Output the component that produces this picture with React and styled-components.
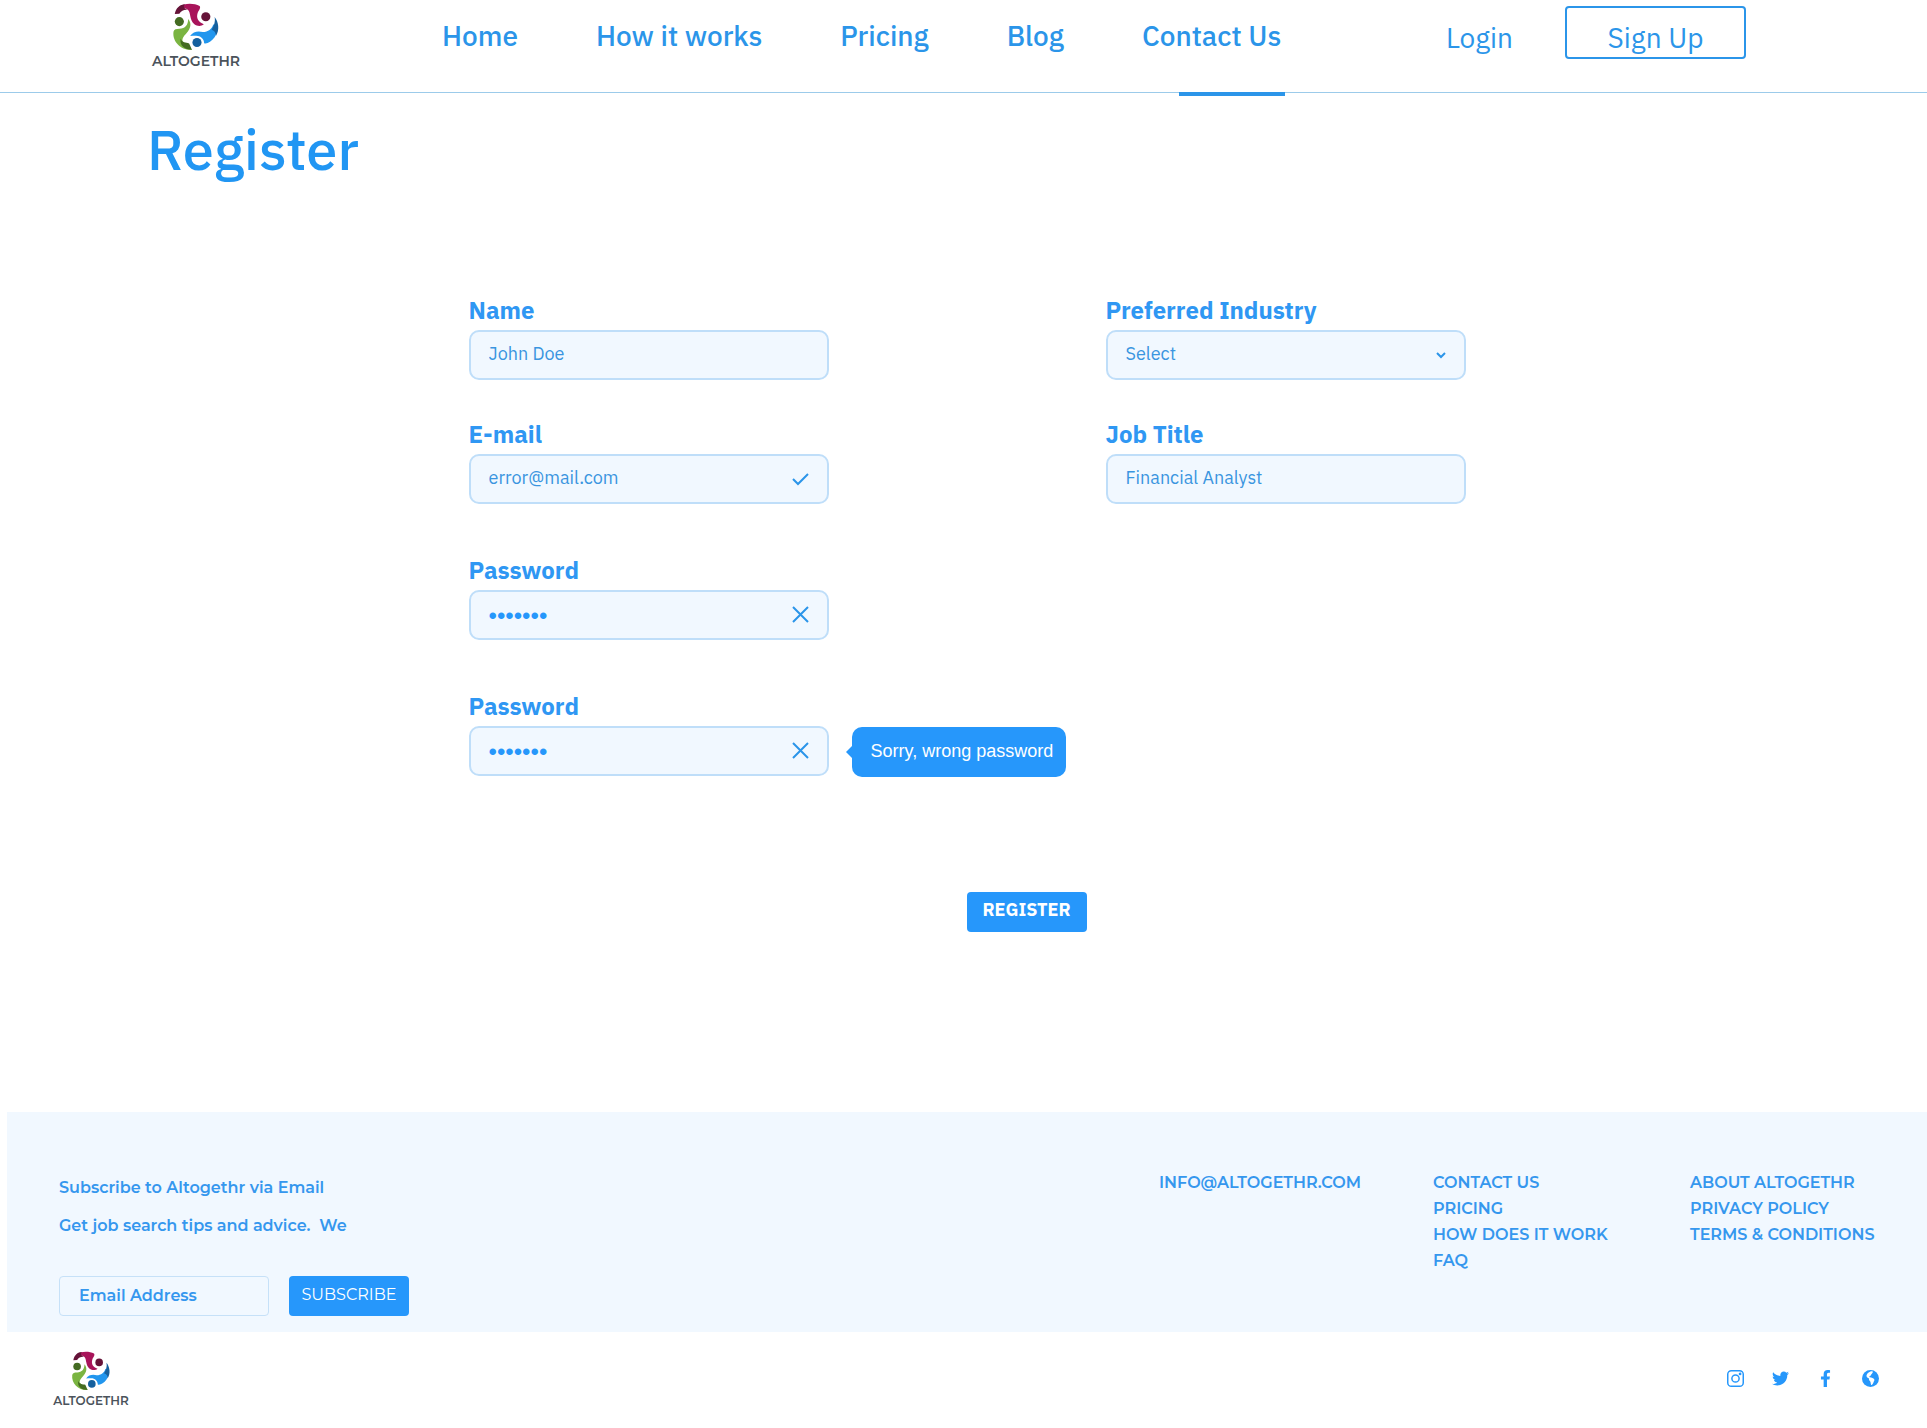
import React from "react";
import styled, { createGlobalStyle } from "styled-components";
import { FaTwitter, FaFacebookF } from "react-icons/fa";

const blue = "#2697fb";
const linkBlue = "#2b95e9";
const fieldText = "#3a95e0";
const fieldBorder = "#bfdef9";
const paleBlue = "#f1f8ff";
const bodyFont = `"IBM Plex Sans", Roboto, "Liberation Sans", sans-serif`;
const footerFont = `Montserrat, Inter, "Liberation Sans", sans-serif`;
const plainFont = `"Liberation Sans", Arial, sans-serif`;

const GlobalStyle = createGlobalStyle`
  *, *::before, *::after { box-sizing: border-box; }
  body { margin: 0; background: #fff; font-family: ${bodyFont}; }
  a { color: inherit; text-decoration: none; }
`;

const Header = styled.header`
  display: flex;
  height: 93px;
  padding: 0 181px 0 150px;
  border-bottom: 1px solid #9ccbea;
`;

const Brand = styled.a`
  display: flex;
  flex-direction: column;
  align-items: center;
  flex: none;
  width: ${(p) => (p.$small ? "76px" : "92px")};
  padding-top: ${(p) => (p.$small ? "0" : "3px")};
  font: 600 ${(p) => (p.$small ? "12px" : "14px")} / 20px ${footerFont};
  color: #4b535b;

  svg {
    flex: none;
    width: ${(p) => (p.$small ? "40px" : "48px")};
    height: ${(p) => (p.$small ? "40px" : "48px")};
  }
`;

const Nav = styled.nav`
  display: flex;
  gap: 78px;
  margin: 0 auto 0 200px;
`;

const NavLink = styled.a`
  position: relative;
  padding-top: 20px;
  font-size: 28px;
  font-weight: 500;
  line-height: 32px;
  white-space: nowrap;
  color: ${linkBlue};

  &[aria-current]::after {
    content: "";
    position: absolute;
    right: -4px;
    bottom: -4px;
    width: 106px;
    height: 4px;
    background: ${linkBlue};
  }
`;

const Account = styled.div`
  display: flex;
  align-items: flex-start;
  gap: 52px;
  padding-top: 6px;
  font-size: 28px;
  line-height: 32px;
  color: ${linkBlue};
`;

const LoginLink = styled.a`
  padding-top: 16px;
`;

const SignUpButton = styled.button`
  width: 181px;
  height: 53px;
  padding: 10px 0 0;
  border: 2px solid ${linkBlue};
  border-radius: 4px;
  background: #fff;
  font: inherit;
  color: inherit;
`;

const Main = styled.main`
  padding: 20px 0 180px 7px;
`;

const Title = styled.h1`
  margin: 0 0 110px 140px;
  font-size: 56px;
  font-weight: 500;
  line-height: 72px;
  color: #2196f3;
`;

const Form = styled.form`
  display: flex;
  flex-direction: column;
  gap: 51px;
  max-width: 997px;
  margin: 0 auto;
`;

const FieldGrid = styled.div`
  display: grid;
  grid-template-columns: 360px 360px;
  justify-content: space-between;
  row-gap: 39px;
`;

const Field = styled.div`
  display: flex;
  flex-direction: column;
  width: 360px;
`;

const Label = styled.label`
  height: 35px;
  font-size: 24px;
  font-weight: 700;
  line-height: 30px;
  color: #2f97f3;
`;

const Control = styled.div`
  position: relative;
  display: flex;
`;

const TextInput = styled.input`
  width: 100%;
  height: 50px;
  padding: 0 48px 3px 18px;
  border: 2px solid ${fieldBorder};
  border-radius: 10px;
  background: ${paleBlue};
  font: 400 18px / 24px ${bodyFont};
  color: ${fieldText};

  &[type="password"] {
    padding: 1px 48px 0 18px;
    font: 400 24px / 24px ${plainFont};
    color: ${blue};
  }
`;

const SelectInput = styled(TextInput)`
  appearance: none;
`;

const FieldIcon = styled.svg`
  position: absolute;
  top: 15px;
  right: 18px;
  width: 20px;
  height: 20px;
  fill: none;
  stroke: ${linkBlue};
  stroke-width: 2;
  pointer-events: none;
`;

const ErrorBubble = styled.div`
  position: absolute;
  left: calc(100% + 23px);
  top: 1px;
  height: 50px;
  padding: 0 13px 0 19px;
  border-radius: 10px;
  background: ${blue};
  font: 400 18px / 48px ${plainFont};
  white-space: nowrap;
  color: #fff;

  &::before {
    content: "";
    position: absolute;
    left: -6px;
    top: 19px;
    border: solid transparent;
    border-width: 6px 6px 6px 0;
    border-right-color: ${blue};
  }
`;

const FormActions = styled.div`
  display: flex;
  justify-content: center;
  padding: 65px 0 0 119px;
`;

const SolidButton = styled.button`
  width: 120px;
  height: 40px;
  padding: 0 0 ${(p) => (p.$strong ? "4px" : "2px")};
  border: 0;
  border-radius: 4px;
  background: ${blue};
  font: ${(p) => (p.$strong ? `700 18px / 24px ${bodyFont}` : `400 16px / 24px ${footerFont}`)};
  color: #fff;
`;

const FooterPanel = styled.section`
  display: flex;
  justify-content: space-between;
  margin-left: 7px;
  padding: 58px 52px 16px;
  background: ${paleBlue};
  font: 600 16px / 26px ${footerFont};
  color: #3597ee;
`;

const Subscribe = styled.form`
  display: flex;
  flex-direction: column;
  padding-top: 5px;
`;

const SubscribeText = styled.p`
  margin: 0 0 12px;
  white-space: pre;
`;

const SubscribeRow = styled.div`
  display: flex;
  gap: 20px;
  margin-top: 25px;
`;

const EmailInput = styled.input`
  width: 210px;
  height: 40px;
  padding: 0 19px 2px;
  border: 1px solid #c6e1f8;
  border-radius: 4px;
  background: transparent;
  font: 600 16px / 24px ${footerFont};
  color: #3597ee;

  &::placeholder {
    color: inherit;
    opacity: 1;
  }
`;

const LinkColumns = styled.nav`
  display: grid;
  grid-template-columns: 274px 257px 185px;
`;

const LinkColumn = styled.div`
  display: flex;
  flex-direction: column;
  align-items: flex-start;
  white-space: nowrap;
`;

const FooterBar = styled.div`
  display: flex;
  justify-content: space-between;
  align-items: flex-start;
  padding: 19px 48px 20px 53px;
`;

const Social = styled.div`
  display: flex;
  gap: 28px;
  padding-top: 19px;
  color: ${blue};
`;

const SocialLink = styled.a`
  display: flex;
  width: 17px;
  height: 17px;

  svg {
    width: 100%;
    height: 100%;
  }
`;

function LogoMark() {
  return (
    <svg viewBox="130 9 142 147" aria-hidden="true">
      <path fill="#a8145a" d="M150 20C165 9 195 9 212 18C217 24 209 31 206 40C201 56 208 68 225 74C216 82 204 80 196 74C180 62 186 38 176 30C168 24 158 24 150 20Z" />
      <path fill="#651338" d="M136 43C139 25 152 13 168 13C160 20 164 26 178 31C168 28 156 32 150 42Z" />
      <circle cx="231" cy="51" r="14" fill="#651338" />
      <path fill="#7ab441" d="M177 58C189 72 184 88 173 100C162 112 158 118 160 126C168 134 176 142 189 152C158 155 128 130 132 97C134 90 140 88 150 88C168 88 177 76 177 58Z" />
      <path fill="#446b22" d="M154 118C158 132 170 130 180 133C184 140 185 146 189 152C166 152 150 140 154 118Z" />
      <circle cx="150" cy="66" r="14" fill="#446b22" />
      <path fill="#2196ee" d="M183 110C192 96 208 94 222 98C238 98 250 88 254 74C268 84 266 102 258 114C248 128 234 135 226 132C226 118 214 108 200 109C194 109 188 109 183 110Z" />
      <path fill="#15609e" d="M258 52C270 66 274 92 262 110C262 100 258 94 249 91C256 80 261 66 258 52Z" />
      <circle cx="204" cy="130" r="14" fill="#15609e" />
    </svg>
  );
}

function Logo({ small }) {
  return (
    <Brand href="#home" $small={small}>
      <LogoMark />
      ALTOGETHR
    </Brand>
  );
}

const CheckIcon = () => (
  <FieldIcon viewBox="0 0 20 20">
    <path d="M2 10l5 5L17 5" />
  </FieldIcon>
);

const CrossIcon = () => (
  <FieldIcon viewBox="0 0 20 20">
    <path d="M2 2l15 15M17 2L2 17" />
  </FieldIcon>
);

const ChevronIcon = () => (
  <FieldIcon viewBox="0 0 20 20">
    <path d="M9 8l4 4 4-4" />
  </FieldIcon>
);

const InstagramIcon = () => (
  <svg viewBox="0 0 16 16" fill="none" stroke="currentColor" strokeWidth="1.4">
    <rect x="0.7" y="0.7" width="14.6" height="14.6" rx="3.4" />
    <circle cx="8" cy="8" r="3.4" />
    <circle cx="12.3" cy="3.7" r="0.6" fill="currentColor" />
  </svg>
);

const GlobeIcon = () => (
  <svg viewBox="0 0 16 16">
    <circle cx="8" cy="8" r="8" fill="currentColor" />
    <path fill="#fff" d="M7.5 1.6C9 1 10.3 1.2 10.4 1.8C9.6 2.4 9.9 3.1 9.1 3.8C8.3 4.4 8.7 5.3 7.6 5.6C6.8 5.9 6.6 6.6 7.3 6.9C9 7 10.9 7.8 11.6 9C12 10.2 11 10.8 10.7 11.9C10.3 13 9.6 14 8.7 14.2C8 13 8.4 11.6 7.6 10.6C6.6 9.8 6.4 8.9 6.6 8C5.4 7.5 4.3 6.6 4.2 5.4C4.5 3.6 5.8 2.3 7.5 1.6Z" />
  </svg>
);

function TextField({ id, label, type = "text", value, icon, error }) {
  return (
    <Field>
      <Label htmlFor={id}>{label}</Label>
      <Control>
        <TextInput id={id} type={type} defaultValue={value} />
        {icon}
        {error && <ErrorBubble role="alert">{error}</ErrorBubble>}
      </Control>
    </Field>
  );
}

const navItems = ["Home", "How it works", "Pricing", "Blog", "Contact Us"];

const footerLinks = [
  ["INFO@ALTOGETHR.COM"],
  ["CONTACT US", "PRICING", "HOW DOES IT WORK", "FAQ"],
  ["ABOUT ALTOGETHR", "PRIVACY POLICY", "TERMS & CONDITIONS"],
];

const socialLinks = [
  ["Instagram", InstagramIcon],
  ["Twitter", FaTwitter],
  ["Facebook", FaFacebookF],
  ["Website", GlobeIcon],
];

export default function App() {
  return (
    <>
      <GlobalStyle />
      <Header>
        <Logo />
        <Nav>
          {navItems.map((item) => (
            <NavLink key={item} href="#" aria-current={item === "Contact Us" ? "page" : undefined}>
              {item}
            </NavLink>
          ))}
        </Nav>
        <Account>
          <LoginLink href="#login">Login</LoginLink>
          <SignUpButton type="button">Sign Up</SignUpButton>
        </Account>
      </Header>

      <Main>
        <Title>Register</Title>
        <Form>
          <FieldGrid>
            <TextField id="name" label="Name" value="John Doe" />
            <Field>
              <Label htmlFor="industry">Preferred Industry</Label>
              <Control>
                <SelectInput as="select" id="industry">
                  <option>Select</option>
                </SelectInput>
                <ChevronIcon />
              </Control>
            </Field>
            <TextField id="email" label="E-mail" type="email" value="error@mail.com" icon={<CheckIcon />} />
            <TextField id="job" label="Job Title" value="Financial Analyst" />
          </FieldGrid>
          <TextField id="password" label="Password" type="password" value="secret1" icon={<CrossIcon />} />
          <TextField
            id="password-repeat"
            label="Password"
            type="password"
            value="secret2"
            icon={<CrossIcon />}
            error="Sorry, wrong password"
          />
          <FormActions>
            <SolidButton type="button" $strong>REGISTER</SolidButton>
          </FormActions>
        </Form>
      </Main>

      <footer>
        <FooterPanel>
          <Subscribe>
            <SubscribeText>Subscribe to Altogethr via Email</SubscribeText>
            <SubscribeText>{"Get job search tips and advice.  We"}</SubscribeText>
            <SubscribeRow>
              <EmailInput type="email" placeholder="Email Address" aria-label="Email Address" />
              <SolidButton type="button">SUBSCRIBE</SolidButton>
            </SubscribeRow>
          </Subscribe>
          <LinkColumns>
            {footerLinks.map((column) => (
              <LinkColumn key={column[0]}>
                {column.map((text) => (
                  <a key={text} href="#">{text}</a>
                ))}
              </LinkColumn>
            ))}
          </LinkColumns>
        </FooterPanel>
        <FooterBar>
          <Logo small />
          <Social>
            {socialLinks.map(([name, Icon]) => (
              <SocialLink key={name} href="#" aria-label={name}>
                <Icon />
              </SocialLink>
            ))}
          </Social>
        </FooterBar>
      </footer>
    </>
  );
}
